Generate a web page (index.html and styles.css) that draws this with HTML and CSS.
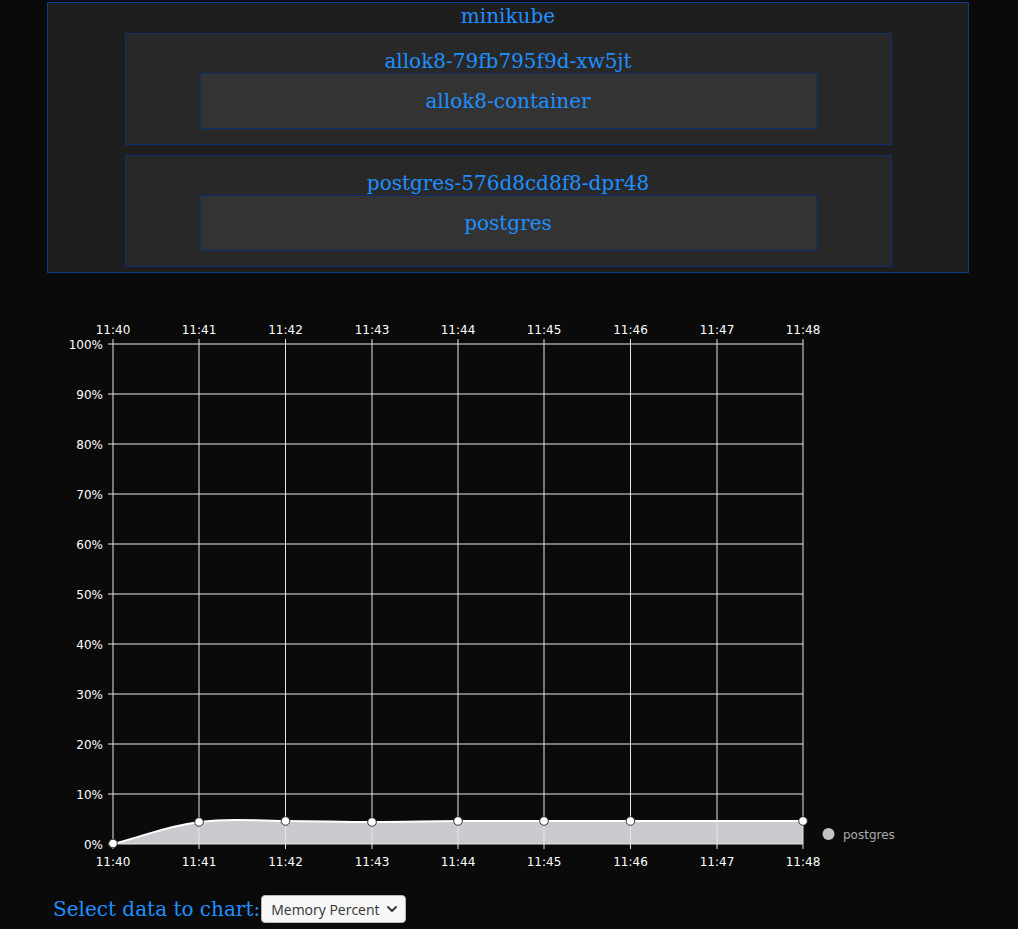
FILE: index.html
```html
<!DOCTYPE html>
<html lang="en">
<head>
    <meta charset="UTF-8">
    <title>Cluster Monitor</title>
    <link rel="stylesheet" href="styles.css">
</head>
<body>
    <div class="cluster">
        <div class="node-name">minikube</div>
        <div class="pod">
            <div class="pod-name">allok8-79fb795f9d-xw5jt</div>
            <div class="container-box">allok8-container</div>
        </div>
        <div class="pod">
            <div class="pod-name">postgres-576d8cd8f8-dpr48</div>
            <div class="container-box">postgres</div>
        </div>
    </div>

    <div class="chart">
        <svg width="860" height="580" viewBox="60 300 860 580">
            <!-- area under the postgres series -->
            <path class="area" d="M113,844 C147.4,835.2 164.1,826.7 199,822 C233,817.5 250.9,821 285.5,821 C320.1,821 337.5,822 372,822 C406.5,822 423.6,821.2 458,821 C492.4,820.8 509.5,821 544,821 C578.5,821 595.9,821 630.5,821 C699.5,821 734,821 803,821 L803,844 Z"/>

            <g class="grid">
                <line x1="108" y1="344" x2="803" y2="344"/>
                <line x1="108" y1="394" x2="803" y2="394"/>
                <line x1="108" y1="444" x2="803" y2="444"/>
                <line x1="108" y1="494" x2="803" y2="494"/>
                <line x1="108" y1="544" x2="803" y2="544"/>
                <line x1="108" y1="594" x2="803" y2="594"/>
                <line x1="108" y1="644" x2="803" y2="644"/>
                <line x1="108" y1="694" x2="803" y2="694"/>
                <line x1="108" y1="744" x2="803" y2="744"/>
                <line x1="108" y1="794" x2="803" y2="794"/>
                <line x1="108" y1="844" x2="803" y2="844"/>
                <line x1="113" y1="339" x2="113" y2="849"/>
                <line x1="199" y1="339" x2="199" y2="849"/>
                <line x1="285.5" y1="339" x2="285.5" y2="849"/>
                <line x1="372" y1="339" x2="372" y2="849"/>
                <line x1="458" y1="339" x2="458" y2="849"/>
                <line x1="544" y1="339" x2="544" y2="849"/>
                <line x1="630.5" y1="339" x2="630.5" y2="849"/>
                <line x1="717" y1="339" x2="717" y2="849"/>
                <line x1="803" y1="339" x2="803" y2="849"/>
            </g>

            <g class="tick-y">
                <text x="103" y="349">100%</text>
                <text x="103" y="399">90%</text>
                <text x="103" y="449">80%</text>
                <text x="103" y="499">70%</text>
                <text x="103" y="549">60%</text>
                <text x="103" y="599">50%</text>
                <text x="103" y="649">40%</text>
                <text x="103" y="699">30%</text>
                <text x="103" y="749">20%</text>
                <text x="103" y="799">10%</text>
                <text x="103" y="849">0%</text>
            </g>

            <g class="tick-x">
                <text x="113" y="334">11:40</text>
                <text x="199" y="334">11:41</text>
                <text x="285.5" y="334">11:42</text>
                <text x="372" y="334">11:43</text>
                <text x="458" y="334">11:44</text>
                <text x="544" y="334">11:45</text>
                <text x="630.5" y="334">11:46</text>
                <text x="717" y="334">11:47</text>
                <text x="803" y="334">11:48</text>

                <text x="113" y="866">11:40</text>
                <text x="199" y="866">11:41</text>
                <text x="285.5" y="866">11:42</text>
                <text x="372" y="866">11:43</text>
                <text x="458" y="866">11:44</text>
                <text x="544" y="866">11:45</text>
                <text x="630.5" y="866">11:46</text>
                <text x="717" y="866">11:47</text>
                <text x="803" y="866">11:48</text>
            </g>

            <path class="series" d="M113,844 C147.4,835.2 164.1,826.7 199,822 C233,817.5 250.9,821 285.5,821 C320.1,821 337.5,822 372,822 C406.5,822 423.6,821.2 458,821 C492.4,820.8 509.5,821 544,821 C578.5,821 595.9,821 630.5,821 C699.5,821 734,821 803,821"/>

            <g class="points">
                <circle cx="113" cy="843.5" r="4.3"/>
                <circle cx="199" cy="822" r="4.3"/>
                <circle cx="285.5" cy="821" r="4.3"/>
                <circle cx="372" cy="822" r="4.3"/>
                <circle cx="458" cy="821" r="4.3"/>
                <circle cx="544" cy="821" r="4.3"/>
                <circle cx="630.5" cy="821" r="4.3"/>
                <circle cx="803" cy="821" r="4.3"/>
            </g>

            <circle class="legend-dot" cx="828.5" cy="834" r="6"/>
            <text class="legend-label" x="843" y="839">postgres</text>
        </svg>
    </div>

    <div class="controls">
        <label for="metric">Select data to chart:</label>
        <div class="select-wrap">
            <select id="metric">
                <option>Memory Percent</option>
                <option>CPU Percent</option>
            </select>
            <svg class="chevron" width="10" height="6" viewBox="0 0 10 6">
                <path d="M1 1 L5 5 L9 1" fill="none" stroke="#333" stroke-width="1.8" stroke-linecap="round" stroke-linejoin="round"/>
            </svg>
        </div>
    </div>
</body>
</html>
```

FILE: styles.css
```css
body {
    margin: 0;
    background: #0a0a0a;
    font-family: "DejaVu Serif", serif;
    color: #1e90ff;
}
.cluster {
    width: 922px;
    box-sizing: border-box;
    margin: 2px 0 0 47px;
    padding: 1px 0 5px;
    border: 1px solid #0d3c90;
    background: #1e1e1e;
    text-align: center;
}
.node-name {
    font-size: 20px;
    line-height: 24px;
    margin-bottom: 5px;
}
.pod {
    width: 767px;
    box-sizing: border-box;
    margin: 0 auto;
    padding: 15px 0;
    border: 1px solid #0b3074;
    background: #282828;
}
.pod + .pod {
    margin-top: 10px;
}
.pod-name {
    font-size: 20px;
    line-height: 24px;
}
.container-box {
    width: 617px;
    box-sizing: border-box;
    margin: 0 auto;
    padding: 15px 0;
    border: 1px solid #0b3074;
    background: #333;
    font-size: 20px;
    line-height: 24px;
}
.chart {
    margin: 27px 0 0 60px;
}
.chart svg {
    display: block;
}
.area {
    fill: rgb(201, 203, 207);
}
.grid line {
    stroke: #e6e6e6;
    stroke-width: 1;
}
.tick-y text,
.tick-x text,
.legend-label {
    font-family: "DejaVu Sans", sans-serif;
    font-size: 12px;
    fill: #fff;
}
.tick-y text {
    text-anchor: end;
}
.tick-x text {
    text-anchor: middle;
}
.series {
    fill: none;
    stroke: #fff;
    stroke-width: 2;
}
.points circle {
    fill: #fff;
    stroke: #333;
    stroke-width: 1;
}
.legend-dot {
    fill: #c2c4c8;
}
.legend-label {
    fill: #aaa;
}
.controls {
    display: flex;
    align-items: center;
    gap: 1px;
    margin: 15px 0 0 53px;
}
.controls label {
    font-size: 20px;
}
.select-wrap {
    position: relative;
}
.select-wrap select {
    appearance: none;
    -webkit-appearance: none;
    display: block;
    width: 145px;
    height: 28px;
    padding: 0 0 0 9px;
    border: 1px solid #b8b8b8;
    border-radius: 4px;
    background: #f7f7f7;
    box-shadow: 0 1px 1px rgba(0, 0, 0, 0.25);
    font-family: "Open Sans", sans-serif;
    font-size: 14px;
    color: #333;
}
.chevron {
    position: absolute;
    right: 9px;
    top: 11px;
    pointer-events: none;
}
```
